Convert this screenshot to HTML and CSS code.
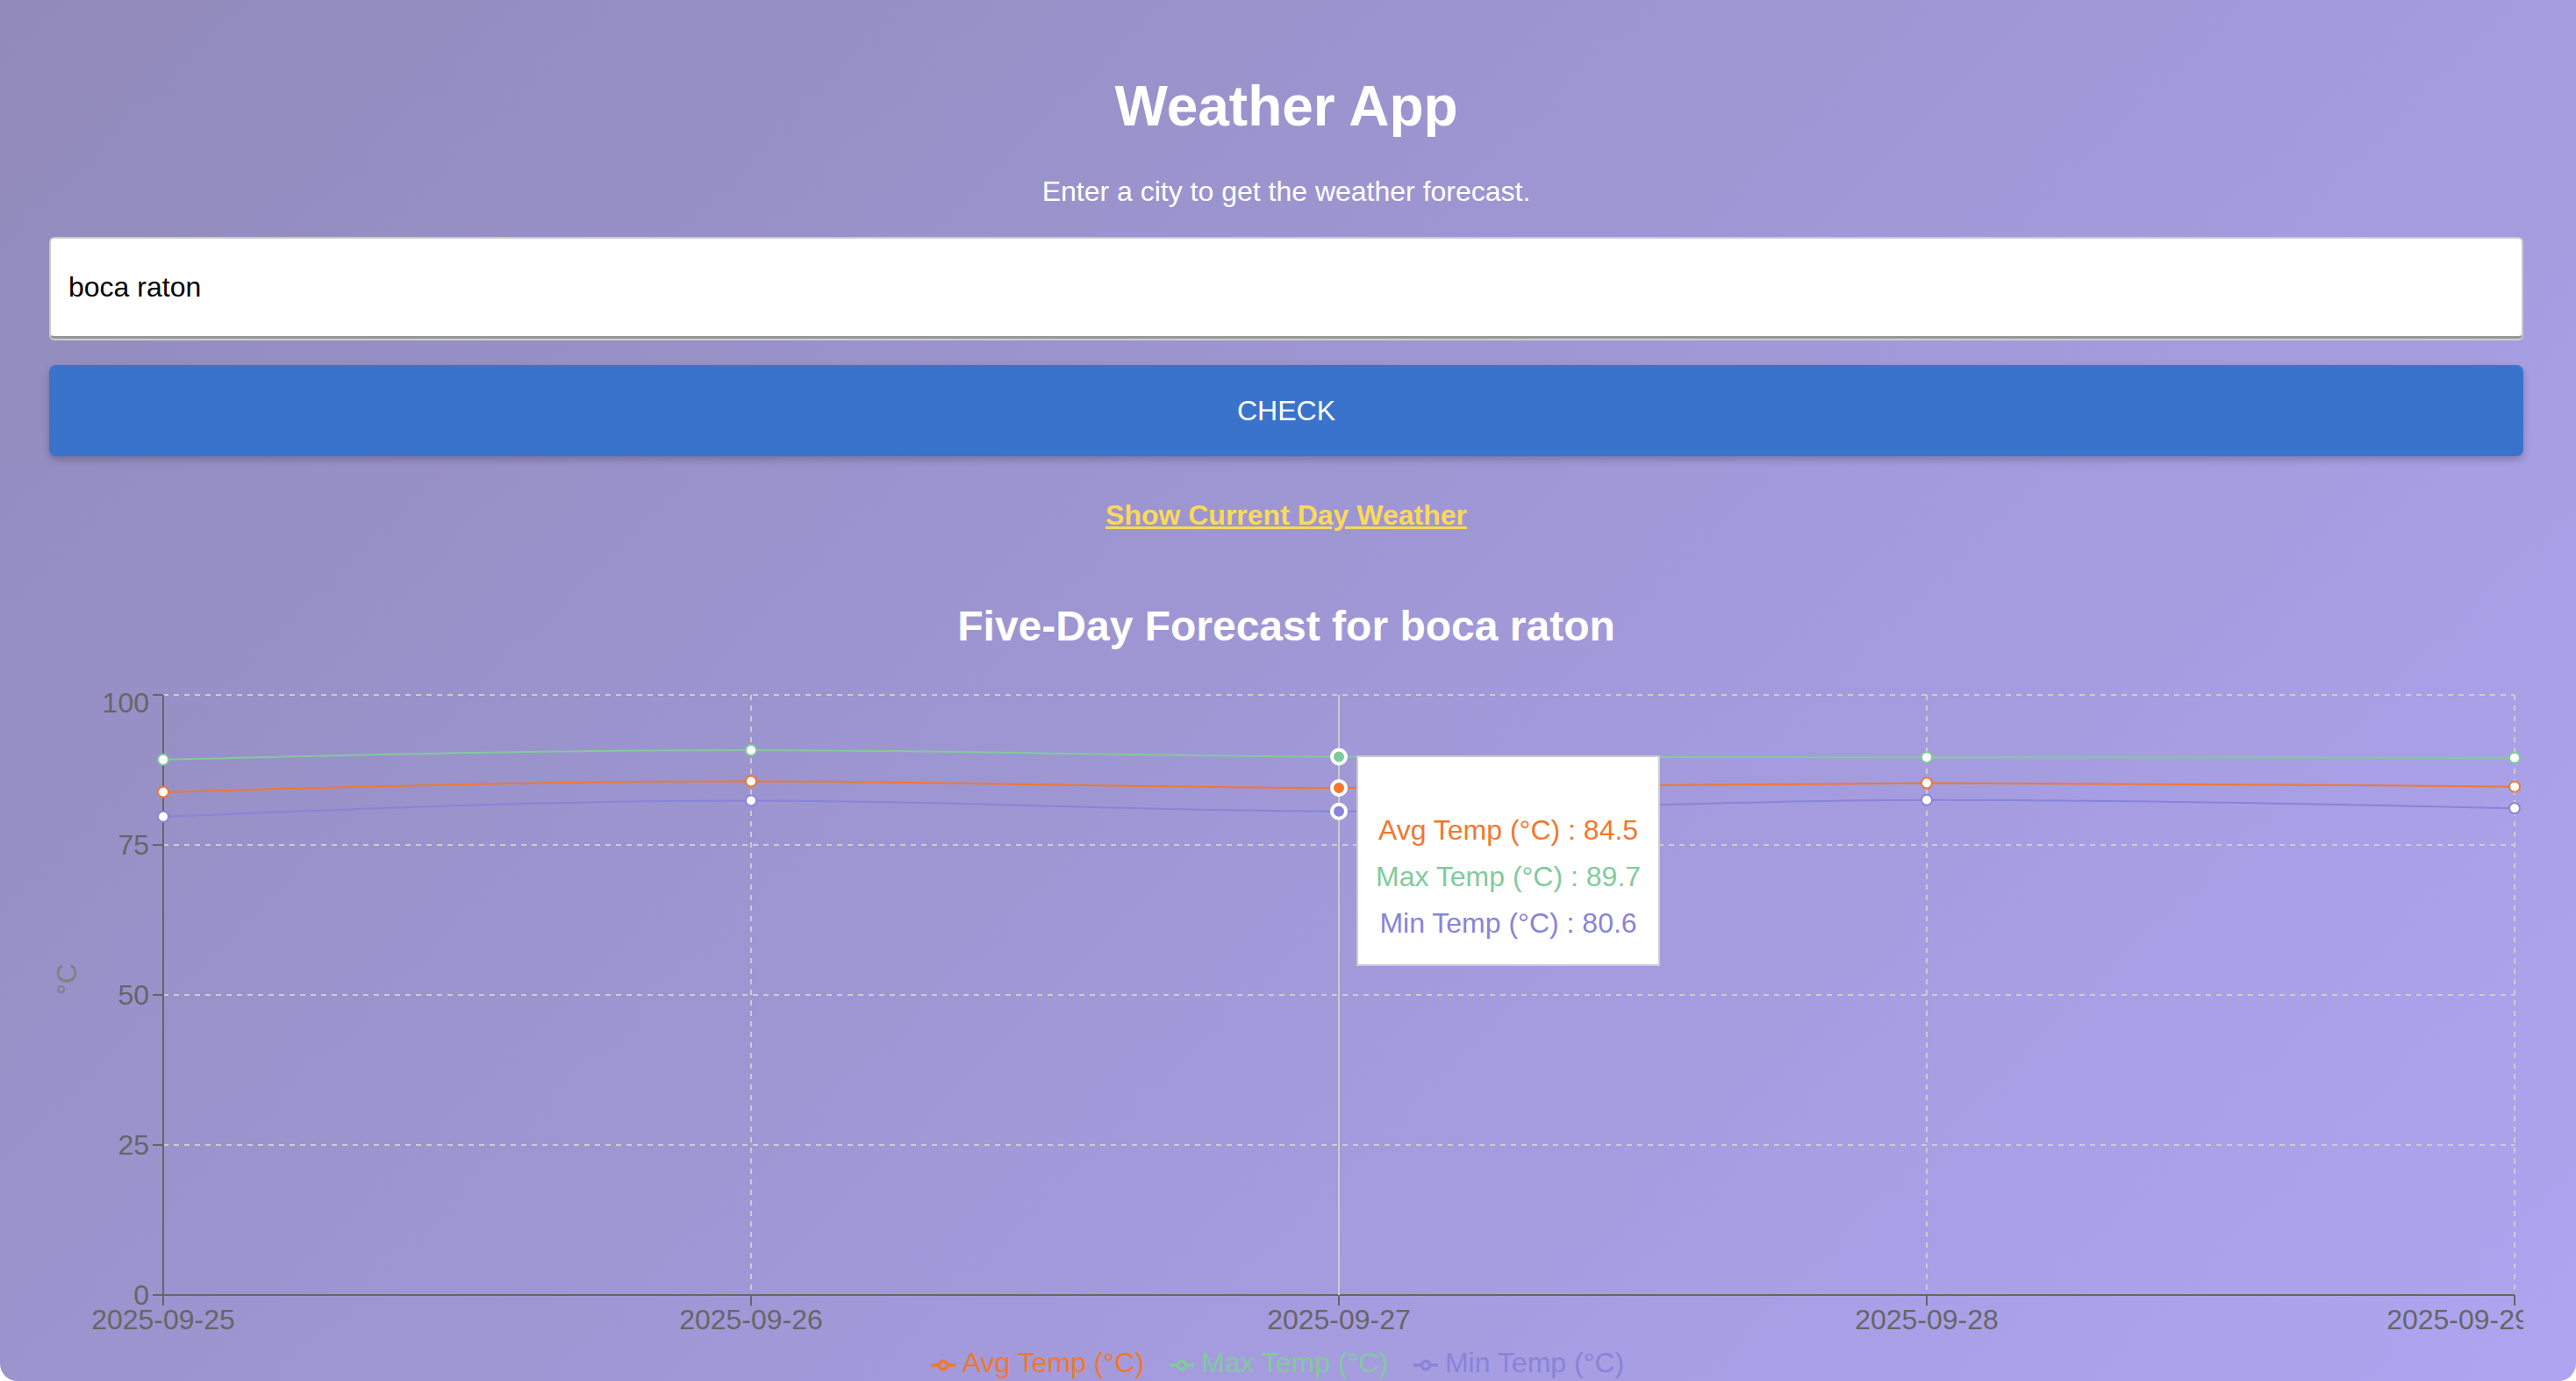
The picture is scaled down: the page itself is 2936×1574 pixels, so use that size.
FILE: index.html
```html
<!DOCTYPE html>
<html lang="en">
<head>
<meta charset="utf-8">
<title>Weather App</title>
<link rel="stylesheet" href="styles.css">
</head>
<body>
<div class="app">
  <h1 class="title">Weather App</h1>
  <p class="subtitle">Enter a city to get the weather forecast.</p>
  <input class="city-input" type="text" value="boca raton">
  <button class="check-btn" type="button">CHECK</button>
  <div class="link-row"><a class="current-link" href="#">Show Current Day Weather</a></div>
  <h2 class="forecast-title">Five-Day Forecast for boca raton</h2>
  <div class="chart">
    <svg class="chart-svg" width="2820" height="753" viewBox="0 0 2820 753">
      <g class="grid">
        <line x1="130" y1="10" x2="2810" y2="10"/>
        <line x1="130" y1="181" x2="2810" y2="181"/>
        <line x1="130" y1="352" x2="2810" y2="352"/>
        <line x1="130" y1="523" x2="2810" y2="523"/>
        <line x1="130" y1="694" x2="2810" y2="694"/>
        <line x1="130" y1="10" x2="130" y2="694"/>
        <line x1="800" y1="10" x2="800" y2="694"/>
        <line x1="1470" y1="10" x2="1470" y2="694"/>
        <line x1="2140" y1="10" x2="2140" y2="694"/>
        <line x1="2810" y1="10" x2="2810" y2="694"/>
      </g>
      <g class="axis">
        <line x1="130" y1="694" x2="2810" y2="694"/>
        <line x1="130" y1="694" x2="130" y2="706"/>
        <line x1="800" y1="694" x2="800" y2="706"/>
        <line x1="1470" y1="694" x2="1470" y2="706"/>
        <line x1="2140" y1="694" x2="2140" y2="706"/>
        <line x1="2810" y1="694" x2="2810" y2="706"/>
        <line x1="130" y1="10" x2="130" y2="694"/>
        <line x1="118" y1="10" x2="130" y2="10"/>
        <line x1="118" y1="181" x2="130" y2="181"/>
        <line x1="118" y1="352" x2="130" y2="352"/>
        <line x1="118" y1="523" x2="130" y2="523"/>
        <line x1="118" y1="694" x2="130" y2="694"/>
      </g>
      <g class="tick-labels x-labels">
        <text x="130" y="733">2025-09-25</text>
        <text x="800" y="733">2025-09-26</text>
        <text x="1470" y="733">2025-09-27</text>
        <text x="2140" y="733">2025-09-28</text>
        <text x="2746" y="733">2025-09-29</text>
      </g>
      <g class="tick-labels y-labels">
        <text x="114" y="30">100</text>
        <text x="114" y="192">75</text>
        <text x="114" y="363">50</text>
        <text x="114" y="534">25</text>
        <text x="114" y="705">0</text>
      </g>
      <text class="y-title" x="20" y="352" dy="0.355em" transform="rotate(-90 20 352)">°C</text>
      <line class="cursor" x1="1470" y1="10" x2="1470" y2="694"/>
      <path class="series avg" d="M130,120.81C353.33,114.66,576.67,108.5,800,108.5C1023.33,108.5,1246.67,116.02,1470,116.02C1693.33,116.02,1916.67,110.55,2140,110.55C2363.33,110.55,2586.67,112.6,2810,114.65"/>
      <g class="dots avg">
        <circle cx="130" cy="120.81" r="6"/>
        <circle cx="800" cy="108.5" r="6"/>
        <circle cx="1470" cy="116.02" r="6"/>
        <circle cx="2140" cy="110.55" r="6"/>
        <circle cx="2810" cy="114.65" r="6"/>
      </g>
      <path class="series max" d="M130,83.87C353.33,78.4,576.67,72.93,800,72.93C1023.33,72.93,1246.67,79.99,1470,80.45C1693.33,80.91,1916.67,80.91,2140,81.14C2363.33,81.37,2586.67,81.59,2810,81.82"/>
      <g class="dots max">
        <circle cx="130" cy="83.87" r="6"/>
        <circle cx="800" cy="72.93" r="6"/>
        <circle cx="1470" cy="80.45" r="6"/>
        <circle cx="2140" cy="81.14" r="6"/>
        <circle cx="2810" cy="81.82" r="6"/>
      </g>
      <path class="series min" d="M130,148.85C353.33,139.62,576.67,130.38,800,130.38C1023.33,130.38,1246.67,142.7,1470,142.7C1693.33,142.7,1916.67,129.7,2140,129.7C2363.33,129.7,2586.67,134.49,2810,139.28"/>
      <g class="dots min">
        <circle cx="130" cy="148.85" r="6"/>
        <circle cx="800" cy="130.38" r="6"/>
        <circle cx="1470" cy="142.7" r="6"/>
        <circle cx="2140" cy="129.7" r="6"/>
        <circle cx="2810" cy="139.28" r="6"/>
      </g>
      <circle class="active-dot avg" cx="1470" cy="116.02" r="8"/>
      <circle class="active-dot max" cx="1470" cy="80.45" r="8"/>
      <circle class="active-dot min" cx="1470" cy="142.7" r="8"/>
    </svg>
    <div class="tooltip">
      <p class="tooltip-label">&nbsp;</p>
      <ul class="tooltip-items">
        <li class="tooltip-item avg">Avg Temp (°C) : 84.5</li>
        <li class="tooltip-item max">Max Temp (°C) : 89.7</li>
        <li class="tooltip-item min">Min Temp (°C) : 80.6</li>
      </ul>
    </div>
    <ul class="legend">
      <li class="legend-item avg"><svg class="legend-icon" viewBox="0 0 32 32"><path d="M0,16h10.67A5.33,5.33,0,1,1,21.33,16H32M21.33,16A5.33,5.33,0,1,1,10.67,16"/></svg><span>Avg Temp (°C)</span></li>
      <li class="legend-item max"><svg class="legend-icon" viewBox="0 0 32 32"><path d="M0,16h10.67A5.33,5.33,0,1,1,21.33,16H32M21.33,16A5.33,5.33,0,1,1,10.67,16"/></svg><span>Max Temp (°C)</span></li>
      <li class="legend-item min"><svg class="legend-icon" viewBox="0 0 32 32"><path d="M0,16h10.67A5.33,5.33,0,1,1,21.33,16H32M21.33,16A5.33,5.33,0,1,1,10.67,16"/></svg><span>Min Temp (°C)</span></li>
    </ul>
  </div>
</div>
</body>
</html>
```

FILE: styles.css
```css
html, body {
  margin: 0;
  padding: 0;
  background: #ffffff;
}

body {
  font-family: "Liberation Sans", Arial, Helvetica, sans-serif;
}

.app {
  box-sizing: border-box;
  height: 100vh;
  overflow: hidden;
  padding: 84px 60px 0 56px;
  text-align: center;
  color: #ffffff;
  background: linear-gradient(135deg, #918aba 0%, #aea5f1 100%);
  border-radius: 0 0 20px 20px;
}

.title {
  margin: 0 0 42px;
  font-size: 64px;
  line-height: 74px;
  font-weight: bold;
}

.subtitle {
  margin: 0 0 33px;
  font-size: 32px;
  line-height: 37px;
}

.city-input {
  display: block;
  box-sizing: border-box;
  width: 100%;
  height: 116px;
  margin: 0;
  padding: 0 20px;
  font-family: inherit;
  font-size: 32px;
  color: #000000;
  background: #ffffff;
  border: 2px solid #c9c9c9;
  border-bottom: 3px solid #979797;
  border-radius: 6px;
  box-shadow: 0 2px 0 #cfcfcf;
  outline: none;
}

.check-btn {
  display: block;
  width: 100%;
  height: 104px;
  margin: 30px 0 0;
  padding: 0;
  border: none;
  border-radius: 8px;
  background: #3a73cc;
  color: #ffffff;
  font-family: inherit;
  font-size: 32px;
  box-shadow: 0 4px 8px rgba(0, 0, 0, 0.22);
}

.link-row {
  margin-top: 49px;
  font-size: 32px;
  line-height: 37px;
}

.current-link {
  color: #fbd95a;
  font-weight: bold;
  text-decoration: underline;
}

.forecast-title {
  margin: 80px 0 41px;
  font-size: 48px;
  line-height: 55px;
  font-weight: bold;
}

.chart {
  position: relative;
}

.chart-svg {
  display: block;
  font-family: "Liberation Sans", Arial, Helvetica, sans-serif;
  font-size: 32px;
}

.grid line {
  stroke: #cccccc;
  stroke-width: 2;
  stroke-dasharray: 6 6;
}

.axis line {
  stroke: #666666;
  stroke-width: 2;
}

.tick-labels text {
  fill: #666666;
}

.x-labels text {
  text-anchor: middle;
}

.y-labels text {
  text-anchor: end;
}

.y-title {
  fill: #808080;
  text-anchor: start;
}

.cursor {
  stroke: #cccccc;
  stroke-width: 2;
}

.series {
  fill: none;
  stroke-width: 2;
}

.series.avg { stroke: #f0782f; }
.series.max { stroke: #82ca9d; }
.series.min { stroke: #8884d8; }

.dots circle {
  fill: #ffffff;
  stroke-width: 2;
}

.dots.avg circle { stroke: #f0782f; }
.dots.max circle { stroke: #82ca9d; }
.dots.min circle { stroke: #8884d8; }

.active-dot {
  stroke: #ffffff;
  stroke-width: 4;
}

.active-dot.avg { fill: #f0782f; }
.active-dot.max { fill: #82ca9d; }
.active-dot.min { fill: #8884d8; }

.tooltip {
  position: absolute;
  left: 1490px;
  top: 79px;
  margin: 0;
  padding: 20px;
  background: #ffffff;
  border: 2px solid #cccccc;
  white-space: nowrap;
  font-size: 32px;
  line-height: 37px;
  pointer-events: none;
}

.tooltip-label {
  margin: 0;
}

.tooltip-items {
  margin: 0;
  padding: 0;
  list-style: none;
}

.tooltip-item {
  display: block;
  padding: 8px 0;
}

.tooltip-item.avg { color: #f0782f; }
.tooltip-item.max { color: #82ca9d; }
.tooltip-item.min { color: #8884d8; }

.legend {
  margin: 0;
  padding: 0;
  list-style: none;
  text-align: center;
  font-size: 32px;
  line-height: 37px;
}

.legend-item {
  display: inline-block;
  margin-right: 20px;
}

.legend-icon {
  display: inline-block;
  width: 28px;
  height: 28px;
  margin-right: 8px;
  vertical-align: middle;
}

.legend-icon path {
  fill: none;
  stroke-width: 4;
}

.legend-item.avg { color: #f0782f; }
.legend-item.avg path { stroke: #f0782f; }
.legend-item.max { color: #82ca9d; }
.legend-item.max path { stroke: #82ca9d; }
.legend-item.min { color: #8884d8; }
.legend-item.min path { stroke: #8884d8; }
```
